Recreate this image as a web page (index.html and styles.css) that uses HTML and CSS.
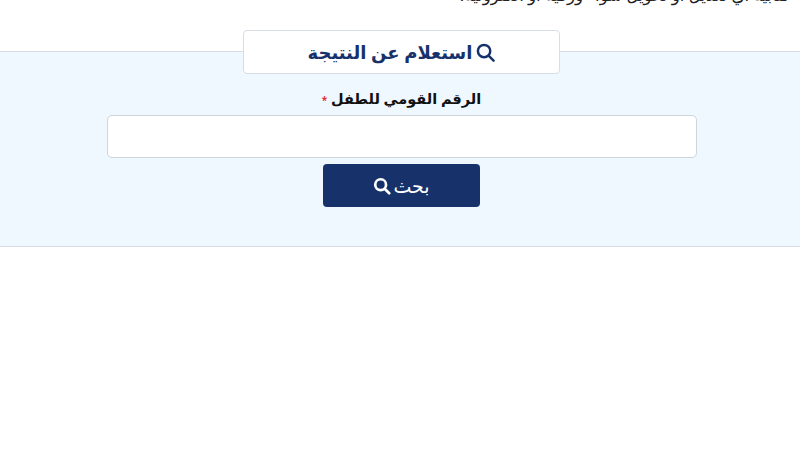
FILE: index.html
```html
<!DOCTYPE html>
<html lang="ar" dir="rtl">

<head>
  <meta charset="utf-8">
  <title>استعلام عن النتيجة</title>
  <link rel="stylesheet" href="styles.css">
</head>

<body>
  <p class="note">كتابية أي تعديل أو تحويل سواء ورقية أو الكترونية.</p>

  <section class="result-section">
    <div class="section-title">
      <svg class="icon" viewBox="0 0 20 20"><circle cx="8.5" cy="8.5" r="6.5" /><path d="M13.5 13.5l5 5" /></svg>
      <h2>استعلام عن النتيجة</h2>
    </div>

    <form class="search-form">
      <label for="national-id">الرقم القومي للطفل <span class="required">*</span></label>
      <input type="text" id="national-id" name="national-id">
      <button type="button" class="btn">
        <span>بحث</span>
        <svg class="icon" viewBox="0 0 20 20"><circle cx="8.5" cy="8.5" r="6" /><path d="M13 13l5 5" /></svg>
      </button>
    </form>
  </section>
</body>

</html>
```

FILE: styles.css
```css
html,
body {
  margin: 0;
  padding: 0;
  height: 100%;
  overflow: hidden;
  background-color: #ffffff;
  font-family: "Noto Sans", "DejaVu Sans", sans-serif;
}

.note {
  height: 20px;
  margin: -15px 0 0;
  padding-right: 10px;
  font-size: 16.6px;
  line-height: 20px;
  color: #222222;
}

.result-section {
  display: flex;
  flex-direction: column;
  align-items: center;
  box-sizing: border-box;
  height: 196px;
  margin-top: 46px;
  padding-left: 3px;
  background-color: #eff7ff;
  border-top: 1px solid #d8dde3;
  border-bottom: 1px solid #d8dde3;
}

.section-title {
  display: flex;
  align-items: center;
  justify-content: center;
  gap: 4px;
  box-sizing: border-box;
  width: 317px;
  height: 44px;
  margin-top: -22px;
  background-color: #ffffff;
  border: 1px solid #d8dde3;
  border-radius: 4px;
  color: #17326b;
}

.section-title h2 {
  margin: 0;
  font-size: 18px;
  font-weight: 600;
  line-height: 24px;
}

.section-title .icon {
  width: 19px;
  height: 19px;
  stroke-width: 2.6;
}

.icon {
  fill: none;
  stroke: currentColor;
  stroke-width: 3;
  stroke-linecap: round;
}

.search-form {
  display: flex;
  flex-direction: column;
  align-items: center;
  margin-top: 14px;
}

label {
  height: 27px;
  font-size: 14.5px;
  font-weight: 600;
  line-height: 20px;
  color: #111111;
}

.required {
  font-size: 10px;
  color: #e02020;
}

input[type="text"] {
  box-sizing: border-box;
  width: 590px;
  height: 43px;
  background-color: #ffffff;
  border: 1px solid #cdd5dd;
  border-radius: 5px;
}

.btn {
  display: flex;
  align-items: center;
  justify-content: center;
  gap: 2px;
  width: 157px;
  height: 43px;
  margin-top: 6px;
  background-color: #17326b;
  color: #ffffff;
  border: none;
  border-radius: 4px;
  font-family: inherit;
  font-size: 19px;
  font-weight: 400;
}

.btn .icon {
  width: 18px;
  height: 18px;
}
```
